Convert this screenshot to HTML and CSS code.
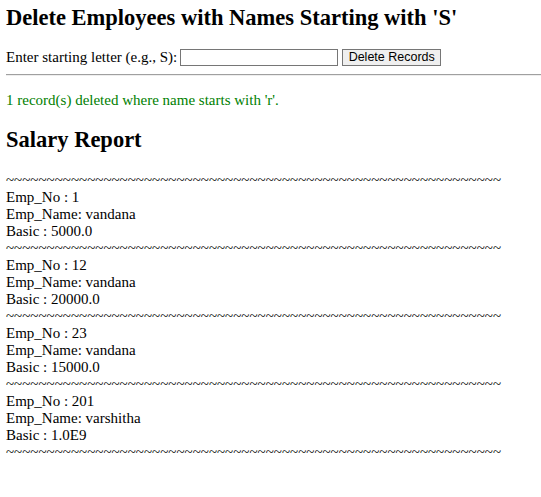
FILE: index.html
```html
<!DOCTYPE html>
<html lang="en">
<head>
<meta charset="utf-8">
<title>Delete Employees</title>
<link rel="stylesheet" href="styles.css">
</head>
<body>
<h2 class="title">Delete Employees with Names Starting with 'S'</h2>
<form class="del-form">
  <label class="del-label" for="letter">Enter starting letter (e.g., S):</label>
  <input class="del-input" type="text" id="letter" name="letter">
  <button class="del-button" type="button">Delete Records</button>
</form>
<hr class="sep">
<p class="msg">1 record(s) deleted where name starts with 'r'.</p>
<h2 class="title title-report">Salary Report</h2>
<div class="report">
  <div class="line">~~~~~~~~~~~~~~~~~~~~~~~~~~~~~~~~~~~~~~~~~~~~~~~~~~~~~~~~~~~~~</div>
  <div class="line">Emp_No : 1</div>
  <div class="line">Emp_Name: vandana</div>
  <div class="line">Basic : 5000.0</div>
  <div class="line">~~~~~~~~~~~~~~~~~~~~~~~~~~~~~~~~~~~~~~~~~~~~~~~~~~~~~~~~~~~~~</div>
  <div class="line">Emp_No : 12</div>
  <div class="line">Emp_Name: vandana</div>
  <div class="line">Basic : 20000.0</div>
  <div class="line">~~~~~~~~~~~~~~~~~~~~~~~~~~~~~~~~~~~~~~~~~~~~~~~~~~~~~~~~~~~~~</div>
  <div class="line">Emp_No : 23</div>
  <div class="line">Emp_Name: vandana</div>
  <div class="line">Basic : 15000.0</div>
  <div class="line">~~~~~~~~~~~~~~~~~~~~~~~~~~~~~~~~~~~~~~~~~~~~~~~~~~~~~~~~~~~~~</div>
  <div class="line">Emp_No : 201</div>
  <div class="line">Emp_Name: varshitha</div>
  <div class="line">Basic : 1.0E9</div>
  <div class="line">~~~~~~~~~~~~~~~~~~~~~~~~~~~~~~~~~~~~~~~~~~~~~~~~~~~~~~~~~~~~~</div>
</div>
</body>
</html>
```
FILE: styles.css
```css
html, body {
  background: #ffffff;
}

body {
  margin: 0;
  padding: 5px 0 0 6px;
  font-family: "Liberation Serif", "Times New Roman", serif;
  font-size: 15px;
  line-height: 17px;
  color: #000000;
}

.title {
  margin: 0;
  font-size: 22.5px;
  line-height: 26px;
  font-weight: bold;
}

.del-form {
  margin: 18px 0 0;
  display: flex;
  align-items: center;
  height: 17px;
}

.del-label {
  line-height: 17px;
  margin-right: 3px;
}

.del-input {
  box-sizing: border-box;
  width: 158px;
  height: 17px;
  margin: 0 4px 0 0;
  padding: 0 2px;
  border: 1px solid #767676;
  background: #ffffff;
  font-family: "Liberation Sans", Arial, sans-serif;
  font-size: 12.5px;
}

.del-button {
  box-sizing: border-box;
  width: 99px;
  height: 17px;
  margin: 0;
  padding: 0;
  border: 1px solid #767676;
  border-radius: 0;
  background: #efefef;
  color: #000000;
  font-family: "Liberation Sans", Arial, sans-serif;
  font-size: 12.5px;
  line-height: 15px;
}

.sep {
  margin: 8px 0 0;
  height: 0;
  border: 0;
  border-top: 1px solid #a0a0a0;
  border-bottom: 1px solid #eeeeee;
}

.msg {
  margin: 16px 0 0;
  color: #008000;
}

.title-report {
  margin-top: 18px;
}

.report {
  margin-top: 19px;
}

.line {
  white-space: nowrap;
}
```
